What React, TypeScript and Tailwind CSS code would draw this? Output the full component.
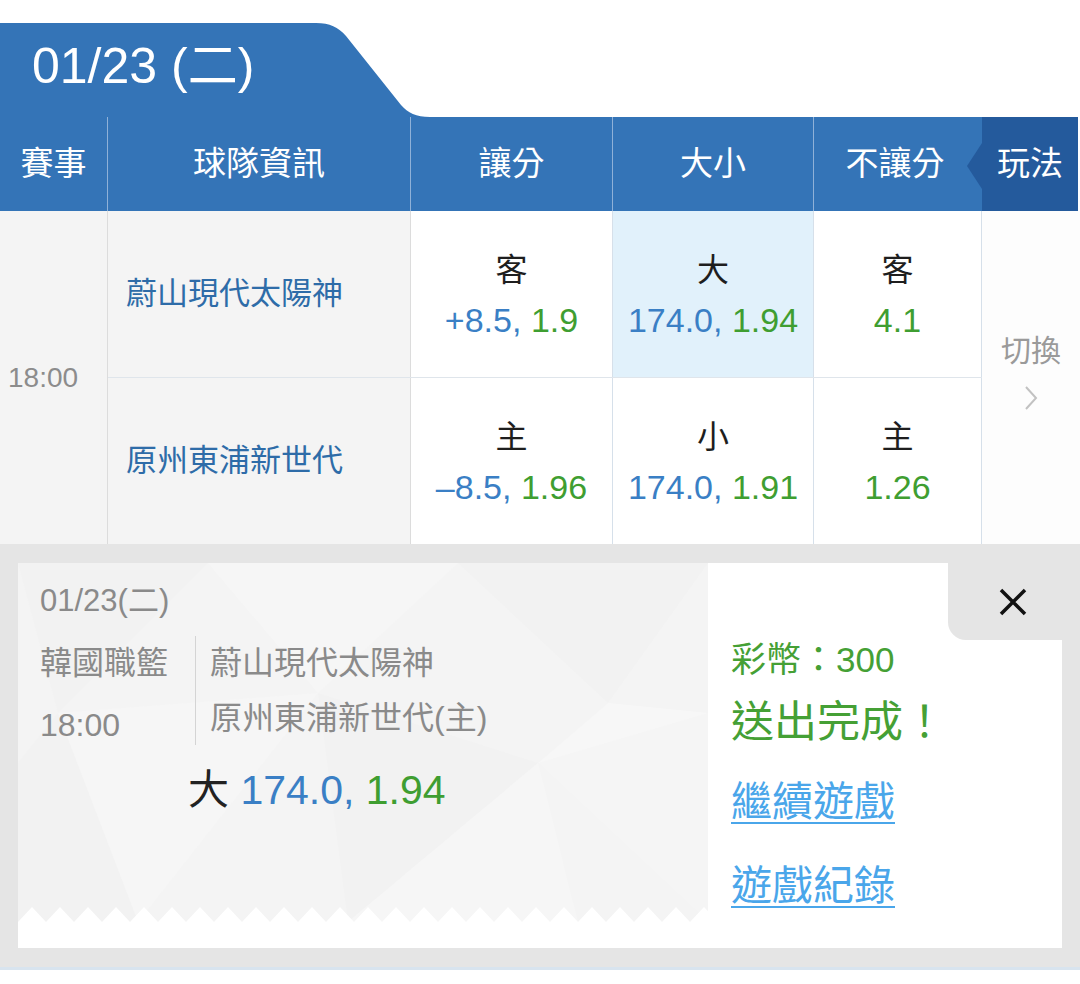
const FONT = "font-['Liberation_Sans','Noto_Sans_CJK_TC',sans-serif]";

type Odd = { label: string; line?: string; price: string };

const ROWS: { team: string; h: string; odds: Odd[]; hl: number }[] = [
  {
    team: '蔚山現代太陽神',
    h: 'h-[167px]',
    hl: 1,
    odds: [
      { label: '客', line: '+8.5', price: '1.9' },
      { label: '大', line: '174.0', price: '1.94' },
      { label: '客', price: '4.1' },
    ],
  },
  {
    team: '原州東浦新世代',
    h: 'h-[166px]',
    hl: -1,
    odds: [
      { label: '主', line: '\u20138.5', price: '1.96' },
      { label: '小', line: '174.0', price: '1.91' },
      { label: '主', price: '1.26' },
    ],
  },
];

const ODD_W = ['w-[202px]', 'w-[201px]', 'w-[168px]'];

function zigzag(width: number, tooth: number, h: number) {
  let d = `M0 ${h}`;
  for (let x = 0; x < width; x += tooth) {
    d += ` L${x + tooth / 2} 0 L${x + tooth} ${h}`;
  }
  return d + ' Z';
}

// faint low-poly backdrop of the ticket
function Pattern() {
  return (
    <svg className="absolute inset-0" width="690" height="359" viewBox="0 0 690 359" preserveAspectRatio="none">
      <rect width="690" height="359" fill="#f4f4f4" />
      <polygon points="0,0 190,0 40,150" fill="#f2f2f2" />
      <polygon points="190,0 440,0 300,130" fill="#f6f6f6" />
      <polygon points="440,0 690,0 590,140" fill="#f2f2f2" />
      <polygon points="40,150 300,130 120,359" fill="#f6f6f6" />
      <polygon points="300,130 520,200 330,359" fill="#f2f2f2" />
      <polygon points="520,200 690,150 690,359" fill="#f5f5f5" />
      <polygon points="0,200 40,150 120,359 0,359" fill="#f2f2f2" />
      <polygon points="590,140 690,150 520,200" fill="#f7f7f7" />
      <polygon points="330,359 520,200 560,359" fill="#f6f6f6" />
    </svg>
  );
}

export default function App() {
  return (
    <div className={`w-[1080px] h-[984px] overflow-hidden bg-white ${FONT}`}>
      {/* date tab */}
      <div className="pt-[23px]">
        <div className="relative h-[94px] w-[440px]">
          <svg className="absolute inset-0" width="440" height="94" viewBox="0 0 440 94">
            <path d="M0 0 H316 C330 0 338 4 346 13 L401 82 C408 90 416 94 430 94 H0 Z" fill="#3474b7" />
          </svg>
          <div className="relative flex h-full items-center pb-[8px] pl-[32px] text-[50px] leading-none text-white">
            01/23 (二)
          </div>
        </div>
      </div>

      {/* header */}
      <div className="flex h-[94px] bg-[#3474b7] text-[33px] text-white">
        <div className="flex w-[108px] items-center justify-center border-r border-[#8fb1d8]">賽事</div>
        <div className="flex w-[303px] items-center justify-center border-r border-[#8fb1d8]">球隊資訊</div>
        <div className="flex w-[202px] items-center justify-center border-r border-[#8fb1d8]">讓分</div>
        <div className="flex w-[201px] items-center justify-center border-r border-[#8fb1d8]">大小</div>
        <div className="flex w-[168px] items-center justify-center pr-[6px]">不讓分</div>
        <div className="relative flex flex-1 items-center justify-center border-r-2 border-white bg-[#245a9c]">
          <svg className="absolute left-[-15px] top-[26px]" width="15" height="46" viewBox="0 0 15 46">
            <polygon points="15,0 0,23 15,46" fill="#245a9c" />
          </svg>
          玩法
        </div>
      </div>

      {/* body */}
      <div className="flex h-[333px]">
        <div className="flex w-[108px] items-center border-r border-[#dcdcdc] bg-[#f4f4f4] pl-[8px] text-[28px] text-[#8c8c8c]">
          18:00
        </div>
        <div className="flex flex-col">
          {ROWS.map((r, ri) => (
            <div key={ri} className={`flex ${r.h} ${ri === 0 ? 'border-b border-[#dfe5eb]' : ''}`}>
              <div className="flex w-[303px] items-center border-r border-[#dcdcdc] bg-[#f4f4f4] pl-[18px] text-[31px] text-[#2e6ca8]">
                {r.team}
              </div>
              {r.odds.map((o, oi) => (
                <div
                  key={oi}
                  className={`flex ${ODD_W[oi]} flex-col items-center justify-center border-r border-[#d6e0ea] ${
                    r.hl === oi ? 'bg-[#e1f1fb]' : 'bg-white'
                  }`}
                >
                  <div className="mt-[4px] text-[32px] leading-[48px] text-[#1e1e1e]">{o.label}</div>
                  <div className="text-[34px] leading-[52px]">
                    {o.line && <span className="text-[#3a7fc5]">{o.line}, </span>}
                    <span className="text-[#3f9e31]">{o.price}</span>
                  </div>
                </div>
              ))}
            </div>
          ))}
        </div>
        <div className="flex flex-1 flex-col items-center justify-center bg-[#fdfdfd] pb-[14px]">
          <div className="text-[30px] leading-[40px] text-[#9a9a9a]">切換</div>
          <svg className="mt-[14px]" width="14" height="26" viewBox="0 0 14 26">
            <polyline points="2,2 12,13 2,24" fill="none" stroke="#c2c2c2" strokeWidth="2" />
          </svg>
        </div>
      </div>

      {/* confirmation */}
      <div className="bg-[#e5e5e5] px-[18px] py-[19px]">
        <div className="flex h-[385px]">
          <div className="flex w-[690px] flex-col bg-white">
            <div className="relative flex-1 overflow-hidden">
              <Pattern />
              <svg className="absolute bottom-0 left-0" width="690" height="15" viewBox="0 0 690 15">
                <path d={zigzag(690, 28, 15)} fill="#ffffff" />
              </svg>
              <div className="relative pl-[22px] pt-[18px] text-[#8a8a8a]">
                <div className="text-[31px] leading-[40px]">01/23(二)</div>
                <div className="mt-[15px] flex h-[109px]">
                  <div className="w-[155px] pt-[7px] text-[32px] leading-[40px]">
                    <div>韓國職籃</div>
                    <div className="mt-[22px]">18:00</div>
                  </div>
                  <div className="border-l border-[#d4d4d4] pl-[14px] pt-[7px] text-[32px] leading-[40px]">
                    <div>蔚山現代太陽神</div>
                    <div className="mt-[15px]">原州東浦新世代(主)</div>
                  </div>
                </div>
                <div className="mt-[21px] pl-[148px] text-[41px] leading-[48px]">
                  <span className="text-[#222]">大 </span>
                  <span className="text-[#3a7fc5]">174.0, </span>
                  <span className="text-[#3f9e31]">1.94</span>
                </div>
              </div>
            </div>
            <div className="h-[26px]" />
          </div>
          <div className="relative flex-1 bg-white pl-[23px]">
            <div className="absolute right-0 top-0 flex h-[77px] w-[114px] items-center justify-center rounded-bl-[18px] bg-[#e5e5e5] pl-[16px]">
              <svg width="30" height="30" viewBox="0 0 30 30">
                <path d="M3 3 L27 27 M27 3 L3 27" stroke="#111" strokeWidth="3.5" />
              </svg>
            </div>
            <div className="pt-[75px] text-[35px] leading-[44px] text-[#45a035]">彩幣：300</div>
            <div className="mt-[14px] text-[43px] leading-[52px] text-[#45a035]">送出完成！</div>
            <div className="mt-[29px] text-[41px] leading-[50px] text-[#4aa6ea] underline decoration-2 underline-offset-[6px]">
              繼續遊戲
            </div>
            <div className="mt-[34px] text-[41px] leading-[50px] text-[#4aa6ea] underline decoration-2 underline-offset-[6px]">
              遊戲紀錄
            </div>
          </div>
        </div>
      </div>
      <div className="h-[20px] border-t-[3px] border-[#d8e4ef] bg-white" />
    </div>
  );
}
